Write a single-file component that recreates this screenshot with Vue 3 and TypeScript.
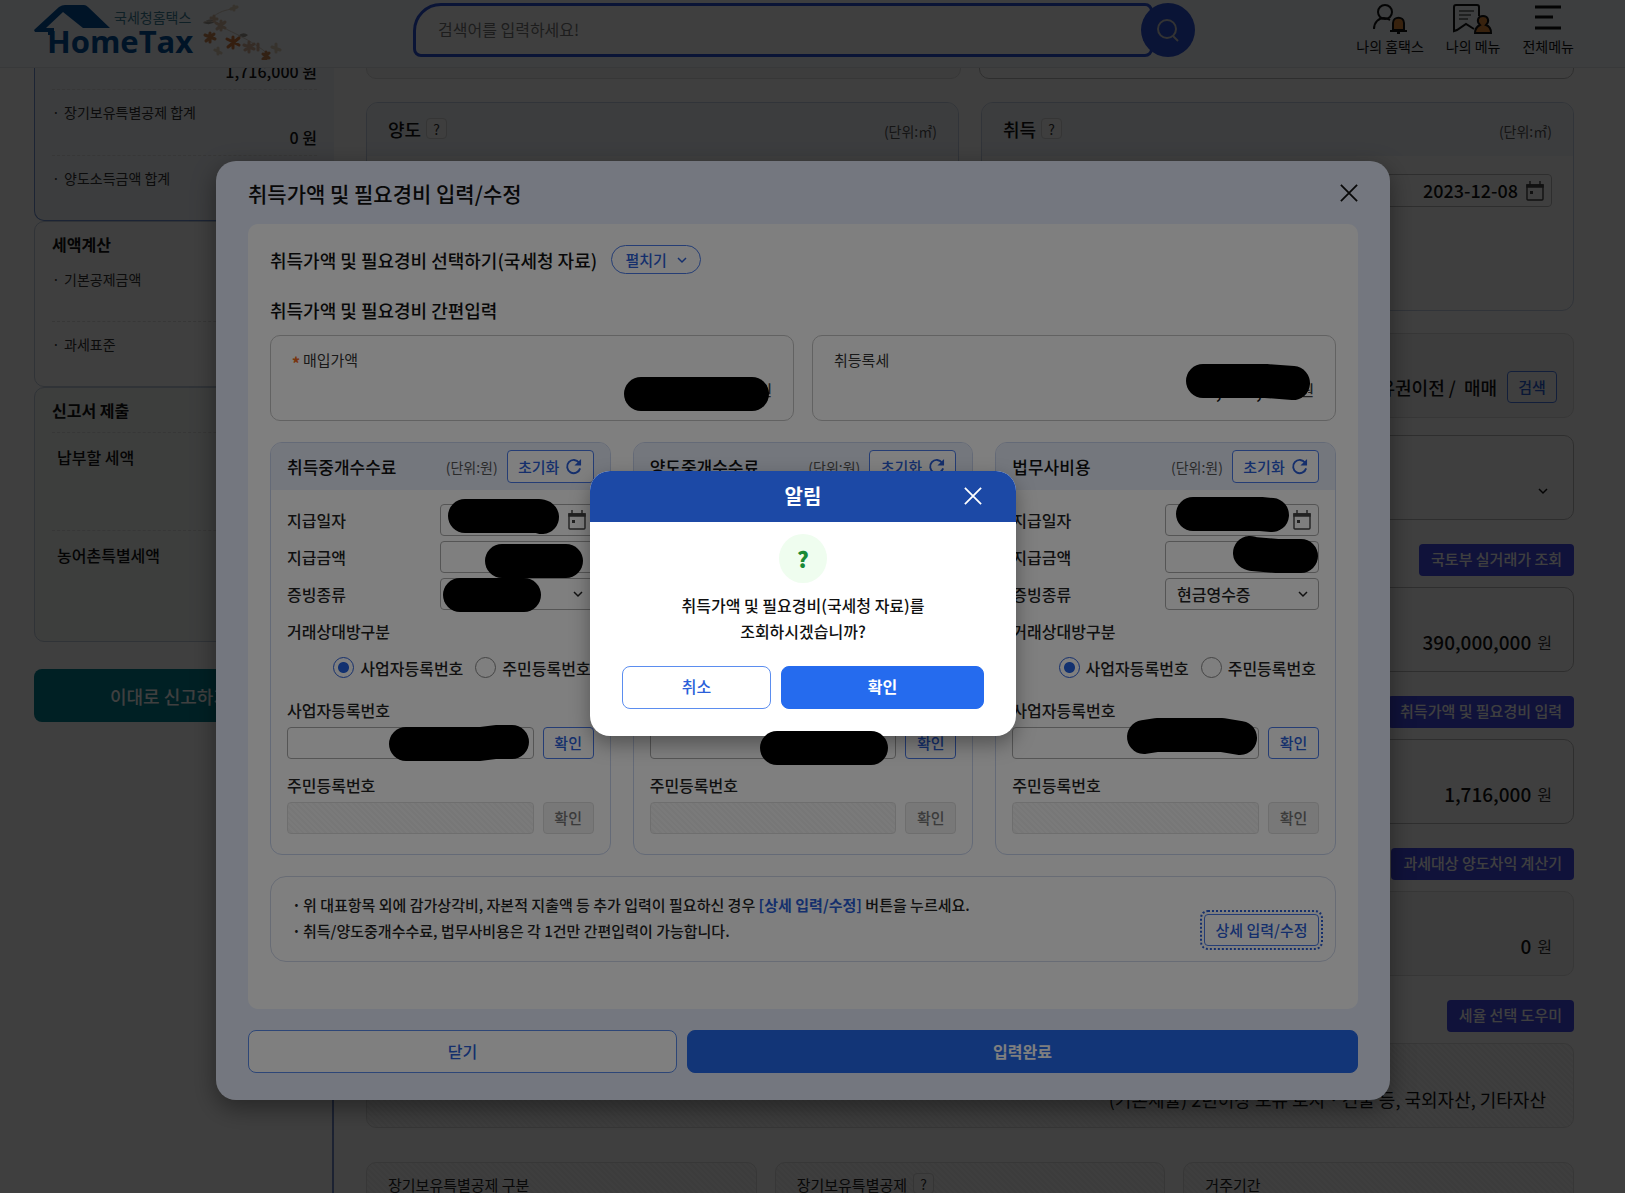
<script setup lang="ts">
import { ref } from 'vue'

interface Mark {
  left: number
  top: number
  width: number
  points: string
}

interface FeeCard {
  id: string
  title: string
  receipt: string
  dateMark?: Mark
  amountMark?: Mark
  receiptMark?: Mark
  bizMark?: Mark
}

const cards: FeeCard[] = [
  {
    id: 'buy',
    title: '취득중개수수료',
    receipt: '현금영수증',
    dateMark: { left: 8, top: -5, width: 111, points: '17,17 91,17 94,18' },
    amountMark: { left: 45, top: 3, width: 98, points: '17,17 81,17' },
    receiptMark: { left: 3, top: 0, width: 98, points: '17,17 81,17' },
    bizMark: { left: 101, top: -3, width: 142, points: '18,20 92,20 108,18 124,18' },
  },
  { id: 'sell', title: '양도중개수수료', receipt: '현금영수증' },
  {
    id: 'legal',
    title: '법무사비용',
    receipt: '현금영수증',
    dateMark: { left: 11, top: -7, width: 113, points: '17,17 85,17 96,18' },
    amountMark: { left: 68, top: -5, width: 86, points: '17,17 20,18 44,20 68,20' },
    bizMark: { left: 115, top: -9, width: 130, points: '17,19 30,17 95,17 113,20' },
  },
]

const payer = ref<Record<string, string>>({ buy: 'biz', sell: 'biz', legal: 'biz' })

const markBox = (m: Mark) => ({ left: m.left + 'px', top: m.top + 'px', width: m.width + 'px' })

const amounts = [
  { action: '국토부 실거래가 조회', value: '390,000,000', muted: false },
  { action: '취득가액 및 필요경비 입력', value: '1,716,000', muted: false },
  { action: '과세대상 양도차익 계산기', value: '0', muted: true },
]
</script>

<template>
  <div class="page">
    <header class="top">
      <a class="logo" href="#" aria-label="국세청홈택스 HomeTax">
        <svg class="roof" viewBox="0 0 78 30" aria-hidden="true">
          <path d="M0 25 25 2Q28 0 31 0H50Q52 0 54 2L76 23H49L29 7 12 23H20V30H14V27H1Z" fill="#00509f" />
        </svg>
        <span class="logo-ko">국세청홈택스</span>
        <span class="logo-en">HomeTax</span>
      </a>
      <svg class="blossom" viewBox="0 0 80 56" aria-hidden="true">
        <path d="M1 19q6-6 13-2q-5 5-13 2zM36 32q5-5 10-1q-4 4-10 1z" fill="#9f9890" stroke="none" />
        <g stroke-linecap="round" fill="none">
          <path d="M2 18c10-4 16 4 24 8s26 12 40 24M12 12c8-6 14-6 22-8" stroke="#d8ccc0" stroke-width="1" />
          <g stroke-width="3">
            <path d="M8 29v8M3 31l10 4M12 30l-8 7M8 33v5" stroke="#c88450" />
            <path d="M31 33v11M25 35l12 6M37 34l-11 9" stroke="#d0783c" />
            <path d="M19 17v9M14 19l9 5M23 18l-8 7M12 12v5M9 14l6 1" stroke="#d6b8a0" />
            <path d="M47 38v10M42 41l10 4M52 40l-9 6M56 40v6" stroke="#d4b298" />
            <path d="M64 48v8M61 50l6 4M67 49l-6 6" stroke="#c88450" />
            <path d="M16 44v6M13 46l6 3M74 40v8M70 43l8 3M32 2v4M29 5l6-2" stroke="#dccdb4" />
          </g>
        </g>
      </svg>
      <form class="search" @submit.prevent>
        <input type="text" aria-label="검색어" placeholder="검색어를 입력하세요!" />
        <button type="submit" aria-label="검색">
          <svg viewBox="0 0 26 26"><circle cx="12" cy="12" r="9" /><path d="m18 19 5 5" /></svg>
        </button>
      </form>
      <nav class="quick">
        <a href="#">
          <svg viewBox="0 0 34 30">
            <circle cx="12" cy="8" r="7" />
            <path d="M1 25c0-7 5-11 10-11 3 0 4 1 6 2" />
            <path d="M20 26v-7c0-7 11-7 11 0v7z" class="orange" />
            <path d="M17 27h17M24 29h3" />
          </svg>
          나의 홈택스
        </a>
        <a href="#">
          <svg viewBox="0 0 40 30">
            <path d="M26 12V3q0-2-2-2H3Q1 1 1 3v24l3-1 9-6 8 5" />
            <path d="M6 7h15M6 11h12M6 15h9" class="thin" />
            <path d="M22 29c0-5 3-7 5-8-4-4-2-9 3-9s7 5 3 9c3 1 5 4 5 8z" class="orange" />
          </svg>
          나의 메뉴
        </a>
        <a href="#">
          <svg viewBox="0 0 28 30"><path d="M1 3h26M1 13h18M1 24h26" class="thick" /></svg>
          전체메뉴
        </a>
      </nav>
    </header>

    <div class="content">
      <aside class="side">
        <section class="panel blue">
          <p class="amount">1,716,000 원</p>
          <div class="item">
            <span class="dot-label">장기보유특별공제 합계</span>
            <p class="amount">0 원</p>
          </div>
          <div class="item"><span class="dot-label">양도소득금액 합계</span></div>
        </section>
        <section class="panel">
          <h3>세액계산</h3>
          <div class="item first"><span class="dot-label">기본공제금액</span></div>
          <div class="item"><span class="dot-label">과세표준</span></div>
        </section>
        <section class="panel green">
          <h3>신고서 제출</h3>
          <div class="item tall"><strong>납부할 세액</strong></div>
          <div class="item tall last"><strong>농어촌특별세액</strong></div>
        </section>
        <button class="submit" type="button">이대로 신고하기</button>
        <div class="rail"></div>
      </aside>

      <main class="main">
        <div class="pair scrolled">
          <div class="box muted"></div>
          <div class="box"></div>
        </div>
        <div class="pair trade">
          <section class="trade-card">
            <header>
              <h2>양도</h2><button class="help" type="button">?</button><span>(단위:㎡)</span>
            </header>
          </section>
          <section class="trade-card">
            <header>
              <h2>취득</h2><button class="help" type="button">?</button><span>(단위:㎡)</span>
            </header>
            <div class="bg-date">
              <input type="text" aria-label="취득일자" value="2023-12-08" />
              <svg class="cal" viewBox="0 0 18 20"><path d="M1 4h16v14q0 1-1 1H2q-1 0-1-1z" /><path d="M1 4h16v2H1zM4 0v4M14 0v4" class="solid" /><path d="M4 10h3v3H4z" class="fill" /></svg>
            </div>
          </section>
        </div>
        <div class="box muted line cause">
          <strong>소유권이전 /&nbsp; 매매</strong>
          <button class="outline" type="button">검색</button>
        </div>
        <div class="box line kind">
          <svg class="chev" viewBox="0 0 10 8"><path d="m1 2 4 4 4-4" /></svg>
        </div>
        <template v-for="a in amounts" :key="a.action">
          <button class="tool" type="button">{{ a.action }}</button>
          <div class="box line" :class="{ muted: a.muted }">
            <strong class="num">{{ a.value }}</strong><span class="won">원</span>
          </div>
        </template>
        <button class="tool" type="button">세율 선택 도우미</button>
        <div class="box line hatch rate">
          <span>(기본세율) 2년이상 보유 토지ㆍ건물 등, 국외자산, 기타자산</span>
        </div>
        <div class="triple">
          <div class="box hatch">장기보유특별공제 구분</div>
          <div class="box hatch">장기보유특별공제<button class="help" type="button">?</button></div>
          <div class="box hatch">거주기간</div>
        </div>
      </main>
    </div>

    <div class="overlay lower">
      <section class="modal" role="dialog" aria-labelledby="modal-title">
        <header class="modal-head">
          <h1 id="modal-title">취득가액 및 필요경비 입력/수정</h1>
          <button type="button" aria-label="닫기">
            <svg viewBox="0 0 20 20"><path d="m1 1 18 18M19 1 1 19" /></svg>
          </button>
        </header>
        <div class="modal-body">
          <div class="pick">
            <h2>취득가액 및 필요경비 선택하기(국세청 자료)</h2>
            <button type="button">펼치기<svg class="chev" viewBox="0 0 10 8"><path d="m1 2 4 4 4-4" /></svg></button>
          </div>
          <h2 class="simple">취득가액 및 필요경비 간편입력</h2>
          <div class="prices">
            <div class="price">
              <span class="caption"><i>*</i>매입가액</span>
              <p><span class="unit">원</span></p>
              <svg class="mark buy-price" height="36"><polyline points="17,17 128,17" /></svg>
            </div>
            <div class="price">
              <span class="caption">취등록세</span>
              <p><strong>0,000,000</strong><span class="unit">원</span></p>
              <svg class="mark tax-price" height="38"><polyline points="17,17 80,17 107,19" /></svg>
            </div>
          </div>

          <div class="cards">
            <section v-for="c in cards" :key="c.id" class="card">
              <header>
                <h3>{{ c.title }}</h3>
                <span>(단위:원)</span>
                <button class="outline reset" type="button">
                  초기화<svg viewBox="0 0 18 18"><path d="M15 5A7 7 0 1 0 16 11" /><path d="M17 1v7h-7z" class="head" /></svg>
                </button>
              </header>
              <div class="form">
                <div class="row">
                  <label :for="c.id + '-date'">지급일자</label>
                  <div class="field">
                    <input :id="c.id + '-date'" type="text" />
                    <svg class="cal" viewBox="0 0 18 20"><path d="M1 4h16v14q0 1-1 1H2q-1 0-1-1z" /><path d="M1 4h16v2H1zM4 0v4M14 0v4" class="solid" /><path d="M4 10h3v3H4z" class="fill" /></svg>
                    <svg v-if="c.dateMark" class="mark" height="40" :style="markBox(c.dateMark)"><polyline :points="c.dateMark.points" /></svg>
                  </div>
                </div>
                <div class="row">
                  <label :for="c.id + '-amount'">지급금액</label>
                  <div class="field">
                    <input :id="c.id + '-amount'" type="text" />
                    <svg v-if="c.amountMark" class="mark" height="40" :style="markBox(c.amountMark)"><polyline :points="c.amountMark.points" /></svg>
                  </div>
                </div>
                <div class="row">
                  <label :for="c.id + '-receipt'">증빙종류</label>
                  <div class="field">
                    <select :id="c.id + '-receipt'"><option>{{ c.receipt }}</option></select>
                    <svg class="chev" viewBox="0 0 10 8"><path d="m1 2 4 4 4-4" /></svg>
                    <svg v-if="c.receiptMark" class="mark" height="40" :style="markBox(c.receiptMark)"><polyline :points="c.receiptMark.points" /></svg>
                  </div>
                </div>
                <div class="row"><span>거래상대방구분</span></div>
                <div class="row radios">
                  <label><input v-model="payer[c.id]" type="radio" :name="c.id" value="biz" />사업자등록번호</label>
                  <label><input v-model="payer[c.id]" type="radio" :name="c.id" value="person" />주민등록번호</label>
                </div>
                <label class="stack" :for="c.id + '-biz'">사업자등록번호</label>
                <div class="check">
                  <div class="field wide">
                    <input :id="c.id + '-biz'" type="text" />
                    <svg v-if="c.bizMark" class="mark" height="40" :style="markBox(c.bizMark)"><polyline :points="c.bizMark.points" /></svg>
                  </div>
                  <button class="outline" type="button">확인</button>
                </div>
                <label class="stack" :for="c.id + '-person'">주민등록번호</label>
                <div class="check">
                  <div class="field wide"><input :id="c.id + '-person'" type="text" disabled /></div>
                  <button class="outline" type="button" disabled>확인</button>
                </div>
              </div>
            </section>
          </div>

          <div class="note">
            <ul>
              <li>위 대표항목 외에 감가상각비, 자본적 지출액 등 추가 입력이 필요하신 경우 <b>[상세 입력/수정]</b> 버튼을 누르세요.</li>
              <li>취득/양도중개수수료, 법무사비용은 각 1건만 간편입력이 가능합니다.</li>
            </ul>
            <button class="outline focus" type="button">상세 입력/수정</button>
          </div>
        </div>
        <footer class="modal-foot">
          <button class="ghost" type="button">닫기</button>
          <button class="primary" type="button">입력완료</button>
        </footer>
      </section>
    </div>

    <div class="overlay upper">
      <section class="alert" role="alertdialog" aria-labelledby="alert-title">
        <header>
          <h2 id="alert-title">알림</h2>
          <button type="button" aria-label="알림 닫기">
            <svg viewBox="0 0 20 20"><path d="m1 1 18 18M19 1 1 19" /></svg>
          </button>
        </header>
        <div class="alert-body">
          <span class="ask">?</span>
          <p>취득가액 및 필요경비(국세청 자료)를<br />조회하시겠습니까?</p>
          <div class="alert-actions">
            <button class="ghost" type="button">취소</button>
            <button class="primary" type="button">확인</button>
          </div>
        </div>
        <svg class="mark below" height="34"><polyline points="17,17 111,17" /></svg>
      </section>
    </div>
  </div>
</template>

<style>
body {
  margin: 0;
  background: #404040;
}
</style>

<style scoped>
* {
  box-sizing: border-box;
}
.page {
  position: relative;
  height: 100vh;
  overflow: hidden;
  display: flex;
  flex-direction: column;
  background: #fff;
  color: #111;
  font-family: "Noto Sans CJK KR", "Noto Sans", sans-serif;
  font-size: 16px;
  line-height: 24px;
}
h1, h2, h3, p, ul {
  margin: 0;
  padding: 0;
  font-weight: 500;
}
strong {
  font-weight: 500;
}
button, input, select {
  font: inherit;
  color: inherit;
  margin: 0;
}
button {
  padding: 0;
  cursor: pointer;
}
svg {
  fill: none;
  stroke: currentColor;
  display: block;
  flex: none;
}

/* header */
.top {
  flex: none;
  height: 68px;
  padding: 0 51px 0 34px;
  display: flex;
  align-items: flex-start;
  background: #f4f8fd;
  border-bottom: 1px solid #e0e4ea;
}
.logo {
  width: 160px;
  height: 60px;
  padding-top: 5px;
  display: grid;
  grid-template-columns: 80px 80px;
  grid-template-rows: 24px 24px;
  text-decoration: none;
}
.roof {
  width: 78px;
  height: 30px;
  stroke: none;
}
.logo-ko {
  font-size: 14px;
  color: #3c8098;
}
.logo-en {
  grid-column: 1 / 3;
  padding-left: 13px;
  font: bold 31px/24px "Open Sans", "Noto Sans", sans-serif;
  color: #00509f;
}
.blossom {
  width: 80px;
  height: 56px;
  margin: 4px 0 0 8px;
}
.search {
  width: 782px;
  margin: 3px auto 0 131px;
  display: flex;
}
.search input {
  flex: 1;
  min-width: 0;
  height: 54px;
  margin-right: -12px;
  padding: 0 22px 2px;
  border: 3px solid #2850d8;
  border-radius: 28px 8px 8px 8px;
  background: #fff;
  outline: 0;
}
.search input::placeholder {
  color: #777;
  opacity: 1;
}
.search button {
  width: 54px;
  height: 54px;
  border: 0;
  border-radius: 50%;
  background: #2850d8;
  color: #ccc;
  display: grid;
  place-items: center;
}
.search svg {
  width: 26px;
  height: 26px;
  stroke-width: 2;
}
.quick {
  display: flex;
  gap: 22px;
  padding-top: 4px;
}
.quick a {
  display: flex;
  flex-direction: column;
  align-items: center;
  color: #111;
  text-decoration: none;
  font-size: 14px;
}
.quick svg {
  height: 30px;
  stroke-width: 2;
}
.quick .orange {
  fill: #e08838;
}
.quick .thin {
  stroke-width: 1;
}
.quick .thick {
  stroke-width: 3;
}

/* page behind the dialogs */
.content {
  flex: 1;
  min-height: 0;
  overflow: hidden;
  display: flex;
  gap: 32px;
  padding: 0 51px 0 34px;
}
.side {
  flex: none;
  width: 300px;
  display: flex;
  flex-direction: column;
}
.panel {
  flex: none;
  padding: 10px 16px 0 17px;
  border: 1px solid #c0ccdc;
  border-radius: 10px;
}
.panel.blue {
  height: 183px;
  margin-top: -30px;
  padding-top: 20px;
  background: #f0f5fa;
  border-color: #7090d0;
  border-right-color: #f0f5fa;
}
.panel:not(.blue):not(.green) {
  height: 166px;
}
.panel.green {
  height: 255px;
  background: #f4f8f6;
}
.panel h3 {
  font-size: 16px;
  font-weight: 600;
}
.amount {
  text-align: right;
  font-weight: 500;
}
.item {
  height: 66px;
  padding-top: 10px;
  border-top: 1px dashed #ddd;
}
.panel.blue > .amount {
  height: 30px;
}
.item.first {
  border-color: transparent;
  height: 65px;
}
.item.tall {
  height: 98px;
  margin-top: 10px;
  padding: 12px 0 0 5px;
}
.item.tall.last {
  margin-top: 0;
}
.item .amount {
  margin-top: 1px;
}
.dot-label {
  display: flex;
  font-size: 14px;
  color: #333;
}
.dot-label::before {
  content: "·";
  width: 12px;
}
.submit {
  flex: none;
  height: 53px;
  margin-top: 27px;
  padding-left: 76px;
  border: 0;
  border-radius: 8px;
  background: #008090;
  color: #fff;
  font-size: 18px;
  font-weight: 500;
  text-align: left;
}
.rail {
  flex: 1;
  border-right: 2px solid #7088c8;
}
.main {
  flex: 1;
  min-width: 0;
}
.pair {
  display: grid;
  grid-template-columns: 1fr 1fr;
  gap: 22px;
}
.pair.scrolled {
  gap: 18px;
  margin-top: -74px;
}
.box {
  height: 85px;
  border: 1px solid #bbb;
  border-radius: 10px;
  background: #fff;
}
.box.muted {
  background: #f6f6f6;
  border-color: #ddd;
}
.box.hatch {
  border-color: #ddd;
  background: repeating-linear-gradient(45deg, #f8f8f8 0 2px, #f0f0f0 2px 4px);
}
.trade {
  margin: 23px 0 22px;
}
.trade-card {
  height: 209px;
  border: 1px solid #c4d0e4;
  border-radius: 12px;
  overflow: hidden;
}
.trade-card header {
  height: 53px;
  padding: 0 21px 2px;
  display: flex;
  align-items: center;
  gap: 5px;
  background: #f0f4fa;
}
.trade-card h2 {
  font-size: 18px;
}
.trade-card header span {
  margin-left: auto;
  padding-top: 4px;
  font-size: 14px;
  color: #555;
}
.help {
  width: 21px;
  height: 21px;
  border: 1px solid #d4d4d4;
  border-radius: 4px;
  background: #fafafa;
  color: #333;
  font-size: 14px;
  line-height: 18px;
}
.bg-date {
  width: 260px;
  height: 33px;
  margin: 18px 21px 0 auto;
  padding-right: 7px;
  display: flex;
  align-items: center;
  gap: 8px;
  border: 1px solid #bbb;
  border-radius: 4px;
}
.bg-date input {
  flex: 1;
  min-width: 0;
  padding: 0 0 2px;
  border: 0;
  background: none;
  text-align: right;
  font-size: 18px;
  font-weight: 500;
}
.cal {
  width: 18px;
  height: 20px;
  color: #444;
  stroke-width: 1.4;
}
.cal .solid,
.cal .fill {
  fill: currentColor;
}
.cal .fill {
  stroke: none;
}
.line {
  display: flex;
  align-items: flex-end;
  justify-content: flex-end;
  padding: 0 21px 17px;
}
.cause {
  padding: 0 16px 14px;
  gap: 10px;
  font-size: 18px;
  line-height: 32px;
}
.outline {
  height: 32px;
  border: 1px solid #4a7bea;
  border-radius: 4px;
  background: #fff;
  color: #2b5fd9;
  font-size: 15px;
  font-weight: 500;
  line-height: 24px;
}
.cause .outline {
  width: 50px;
}
.kind {
  margin-top: 17px;
  padding: 0 25px 24px;
}
.chev {
  width: 10px;
  height: 8px;
  stroke-width: 1.5;
}
.tool {
  display: block;
  height: 32px;
  margin: 24px 0 11px auto;
  padding: 0 12px 2px;
  border: 0;
  border-radius: 4px;
  background: #4048e8;
  color: #fff;
  font-size: 15px;
  font-weight: 500;
}
.num {
  font-size: 19px;
}
.won {
  margin-left: 6px;
  color: #333;
}
.rate {
  padding: 0 27px 16px;
  font-size: 18px;
}
.triple {
  margin-top: 34px;
  display: grid;
  grid-template-columns: 1fr 1fr 1fr;
  gap: 18px;
}
.triple .box {
  display: flex;
  gap: 6px;
  padding: 10px 21px;
  font-size: 15px;
  color: #222;
}

/* dialogs */
.overlay {
  position: absolute;
  inset: 0;
  padding-right: 19px;
  display: flex;
  align-items: center;
  justify-content: center;
  background: rgba(0, 0, 0, 0.5);
}
.lower {
  padding-top: 68px;
}
.upper {
  padding-top: 13px;
}
.modal {
  width: 1174px;
  padding: 0 32px 27px;
  border-radius: 20px;
  background: #e9effe;
  box-shadow: 0 8px 24px rgba(0, 0, 0, 0.4);
}
.modal-head {
  height: 63px;
  display: flex;
  align-items: center;
  justify-content: space-between;
}
.modal-head h1 {
  font-size: 21px;
}
.modal-head button,
.alert header button {
  border: 0;
  background: none;
}
.modal-head svg,
.alert header svg {
  width: 18px;
  height: 18px;
  stroke-width: 2;
}
.modal-body {
  padding: 21px 22px 47px;
  border-radius: 10px;
  background: #fff;
}
.pick {
  display: flex;
  align-items: center;
  gap: 14px;
}
.modal-body h2 {
  font-size: 18px;
}
.pick button {
  width: 90px;
  height: 29px;
  display: flex;
  align-items: center;
  justify-content: center;
  gap: 10px;
  border: 1px solid #4a7bea;
  border-radius: 15px;
  background: #fff;
  color: #2b5fd9;
  font-size: 15px;
  font-weight: 500;
}
.modal-body .simple {
  margin: 24px 0 13px;
}
.prices {
  display: grid;
  grid-template-columns: 1fr 1fr;
  gap: 18px;
}
.price {
  position: relative;
  height: 86px;
  padding: 12px 21px;
  border: 1px solid #c4c4c4;
  border-radius: 10px;
}
.caption {
  display: block;
  font-size: 15px;
  color: #333;
}
.caption i {
  padding-right: 3px;
  font-style: normal;
  font-weight: 900;
  vertical-align: -3px;
  line-height: 16px;
  color: #f26b1d;
}
.price p {
  margin-top: 6px;
  display: flex;
  justify-content: flex-end;
  gap: 4px;
}
.price strong {
  font-size: 20px;
}
.unit {
  font-size: 15px;
  color: #444;
}
.mark {
  position: absolute;
  stroke: #000;
  stroke-width: 34;
  stroke-linecap: round;
  stroke-linejoin: round;
  overflow: visible;
}
.buy-price {
  right: 23px;
  top: 41px;
  width: 146px;
}
.tax-price {
  right: 25px;
  top: 28px;
  width: 124px;
}
.cards {
  margin-top: 21px;
  display: grid;
  grid-template-columns: repeat(3, 1fr);
  gap: 22px;
}
.card {
  border: 1px solid #c8d4ee;
  border-radius: 12px;
}
.card header {
  height: 47px;
  padding: 0 16px;
  display: flex;
  align-items: center;
  border-radius: 11px 11px 0 0;
  background: #e8eefb;
}
.card h3 {
  font-size: 17px;
  margin-right: auto;
}
.card header span {
  margin-right: 9px;
  font-size: 14px;
  color: #555;
}
.reset {
  width: 87px;
  height: 33px;
  display: flex;
  align-items: center;
  justify-content: center;
  gap: 6px;
}
.reset svg {
  width: 17px;
  height: 17px;
  stroke-width: 2;
}
.reset .head {
  fill: currentColor;
  stroke: none;
}
.form {
  padding: 14px 16px 20px;
  color: #222;
  font-weight: 500;
}
.row {
  height: 31px;
  margin-bottom: 6px;
  display: flex;
  align-items: center;
  justify-content: space-between;
}
.field {
  position: relative;
  width: 154px;
  height: 32px;
}
.field input,
.field select {
  width: 100%;
  height: 100%;
  padding: 0 11px;
  border: 1px solid #aaa;
  border-radius: 4px;
  background: #fff;
  appearance: none;
  outline: 0;
}
.field .cal {
  position: absolute;
  right: 8px;
  top: 6px;
}
.field .chev {
  position: absolute;
  right: 11px;
  top: 12px;
}
.radios {
  margin-bottom: 15px;
  padding-right: 3px;
  justify-content: flex-end;
  gap: 12px;
}
.radios label {
  display: flex;
  align-items: center;
  gap: 6px;
}
.radios input {
  width: 21px;
  height: 21px;
  border: 1px solid #888;
  border-radius: 50%;
  background: #fff;
  appearance: none;
}
.radios input:checked {
  border-color: #2b5fd9;
  background: radial-gradient(circle, #2563e0 5px, #fff 6px);
}
.stack {
  display: block;
  margin-bottom: 5px;
}
.check {
  display: flex;
  gap: 9px;
  margin-bottom: 14px;
}
.check:last-child {
  margin-bottom: 0;
}
.field.wide {
  flex: 1;
  width: auto;
}
.check .outline {
  width: 51px;
}
.field input:disabled {
  border-color: #ddd;
  background: repeating-linear-gradient(45deg, #f4f4f4 0 2px, #eee 2px 4px);
}
.outline:disabled {
  border-color: #ddd;
  background: #f0f0f0;
  color: #777;
}
.note {
  height: 86px;
  margin-top: 21px;
  padding: 15px 16px 15px 21px;
  display: flex;
  justify-content: space-between;
  align-items: flex-end;
  border: 1px solid #d0d8ea;
  border-radius: 16px;
}
.note ul {
  align-self: flex-start;
  list-style: none;
  font-size: 15px;
  line-height: 26px;
  color: #222;
}
.note li {
  display: block;
}
.note li::before {
  content: "·";
  display: inline-block;
  width: 11px;
  font-weight: 700;
}
.note b {
  color: #2b5fd9;
  font-weight: 700;
}
.focus {
  width: 115px;
  outline: 2px dotted #2b5fd9;
  outline-offset: 2px;
}
.modal-foot {
  margin-top: 21px;
  display: grid;
  grid-template-columns: 429fr 671fr;
  gap: 10px;
}
.ghost,
.primary {
  height: 43px;
  padding-bottom: 2px;
  border: 1px solid #5b8def;
  border-radius: 8px;
  background: #fff;
  color: #2b5fd9;
  font-weight: 500;
}
.primary {
  border-color: #256bee;
  background: #256bee;
  color: #fff;
  font-weight: 700;
}
.alert {
  position: relative;
  width: 426px;
  border-radius: 20px;
  background: #fff;
  box-shadow: 0 8px 20px rgba(0, 0, 0, 0.35);
}
.alert header {
  height: 51px;
  padding: 0 32px;
  display: grid;
  grid-template-columns: 20px 1fr 20px;
  align-items: center;
  border-radius: 20px 20px 0 0;
  background: #1c49a6;
  color: #fff;
}
.alert h2 {
  grid-column: 2;
  text-align: center;
  font-size: 20px;
  font-weight: 700;
}
.alert-body {
  padding: 12px 32px 27px;
  display: flex;
  flex-direction: column;
  align-items: center;
}
.ask {
  width: 48px;
  height: 49px;
  border-radius: 50%;
  background: #effdef;
  color: #1a8a35;
  font-size: 22px;
  font-weight: 900;
  line-height: 48px;
  text-align: center;
}
.alert-body p {
  margin: 9px 0 22px;
  line-height: 26px;
  text-align: center;
}
.alert-actions {
  width: 100%;
  display: grid;
  grid-template-columns: 149fr 203fr;
  gap: 10px;
}
.below {
  left: 170px;
  bottom: -29px;
  width: 128px;
}
</style>
